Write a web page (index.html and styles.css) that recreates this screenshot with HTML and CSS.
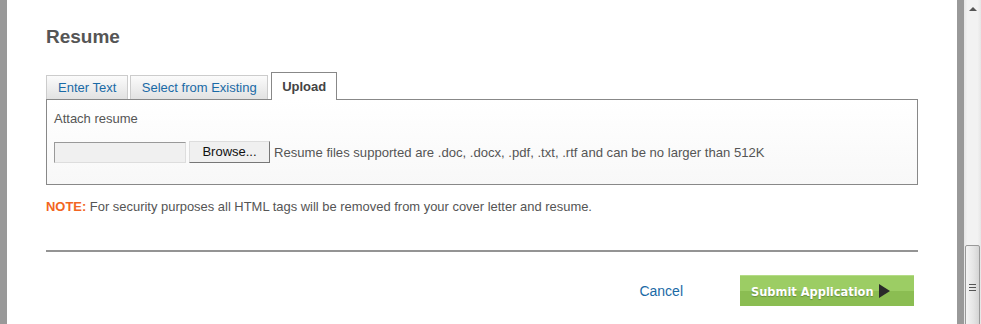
FILE: index.html
```html
<!DOCTYPE html>
<html>
<head>
<meta charset="utf-8">
<link rel="stylesheet" href="styles.css">
</head>
<body>
<div class="frame">
  <div class="bar"></div>
  <main class="content">
    <h2 class="title">Resume</h2>
    <div class="tabs">
      <a class="tab">Enter Text</a>
      <a class="tab">Select from Existing</a>
      <a class="tab active">Upload</a>
    </div>
    <div class="panel">
      <div class="label">Attach resume</div>
      <div class="filerow">
        <span class="filebox"></span>
        <span class="browse">Browse...</span>
        <span class="hint">Resume files supported are .doc, .docx, .pdf, .txt, .rtf and can be no larger than 512K</span>
      </div>
    </div>
    <p class="note"><b>NOTE:</b> For security purposes all HTML tags will be removed from your cover letter and resume.</p>
    <div class="rule"></div>
    <div class="actions">
      <a class="cancel">Cancel</a>
      <a class="submit">Submit Application <span class="arrow"></span></a>
    </div>
  </main>
  <div class="bar"></div>
  <div class="scrollbar">
    <div class="up"></div>
    <div class="track"></div>
    <div class="thumb"><span class="grip"></span></div>
  </div>
</div>
</body>
</html>
```
FILE: styles.css
```css
html, body { margin: 0; padding: 0; background: #fff; }
body { font-family: "Liberation Sans", Arial, sans-serif; font-size: 13px; color: #555; }
.frame { display: flex; height: 324px; overflow: hidden; }
.bar { width: 7px; background: #999; flex: none; }
.content { flex: 1; padding: 0 39px; min-width: 0; }
.title { margin: 26px 0 0; font-size: 19px; line-height: 22px; font-weight: bold; color: #555; font-family: "Liberation Sans", Arial, sans-serif; }
.tabs { display: flex; align-items: flex-end; gap: 2px; margin-top: 24px; height: 27px; position: relative; z-index: 1; }
.tab { box-sizing: border-box; height: 24px; border: 1px solid #ccc; border-bottom: none; background: linear-gradient(#fbfbfb, #e2e2e2); color: #1a6aa6; font-size: 13px; line-height: 23px; padding: 0 11px; }
.tab + .tab { padding: 0 10.5px; }
.tab.active { height: 28px; margin-left: 1px; margin-bottom: -1px; border: 1px solid #888; border-bottom: none; background: #fff; color: #444; font-weight: bold; line-height: 27px; padding: 0 10px; }
.panel { box-sizing: border-box; height: 86px; border: 1px solid #888; background: linear-gradient(#fff, #f8f8f8); padding: 11px 7px 0; }
.label { line-height: 16px; font-size: 13px; }
.filerow { display: flex; align-items: center; margin-top: 14px; }
.filebox { box-sizing: border-box; width: 132px; height: 21px; background: #f0f0f0; border: 1px solid; border-color: #999 #ddd #ddd #999; }
.browse { box-sizing: border-box; width: 81px; height: 22px; margin-left: 3px; background: #f0f0f0; border: 1px solid; border-color: #ddd #777 #777 #ddd; color: #111; font-size: 13px; text-align: center; line-height: 19px; }
.hint { margin-left: 4px; font-size: 13.1px; }
.note { margin: 15px 0 0; line-height: 14px; font-size: 12.95px; }
.note b { color: #f26522; }
.rule { height: 2px; background: #888; margin-top: 36px; opacity: .9; }
.actions { display: flex; align-items: center; justify-content: flex-end; margin-top: 23px; padding-right: 4px; }
.cancel { color: #1a6aa6; font-size: 14px; margin-right: 57px; }
.submit { box-sizing: border-box; width: 174px; height: 31px; background: linear-gradient(#9ccd64 0, #9ccd64 50%, #8bbd52 50%, #8bbd52 100%); border-top: 1px solid #b4dc86; color: #fff; font-family: "DejaVu Sans Condensed", "DejaVu Sans", sans-serif; font-weight: bold; font-size: 12.7px; padding-left: 11px; display: flex; align-items: center; text-shadow: 0 1px 1px rgba(0,0,0,.25); }
.arrow { width: 0; height: 0; border-left: 11px solid #2a2a2a; border-top: 7px solid transparent; border-bottom: 7px solid transparent; margin-left: 5px; }
.scrollbar { width: 17px; flex: none; background: linear-gradient(90deg, #e6e6e6, #f2f2f2 20%, #f2f2f2 80%, #e6e6e6); position: relative; }
.up { position: absolute; left: 5px; top: 7px; width: 0; height: 0; border-left: 4px solid transparent; border-right: 4px solid transparent; border-bottom: 4px solid #555; }
.thumb { position: absolute; left: 1px; right: 1px; top: 245px; bottom: -4px; border: 1px solid #999; border-radius: 2px; background: linear-gradient(90deg, #f4f4f4, #e4e4e4 60%, #d4d4d4); }
.grip { position: absolute; left: 3px; top: 38px; width: 7px; height: 8px; background: repeating-linear-gradient(#555 0 1px, transparent 1px 3px); }
```
